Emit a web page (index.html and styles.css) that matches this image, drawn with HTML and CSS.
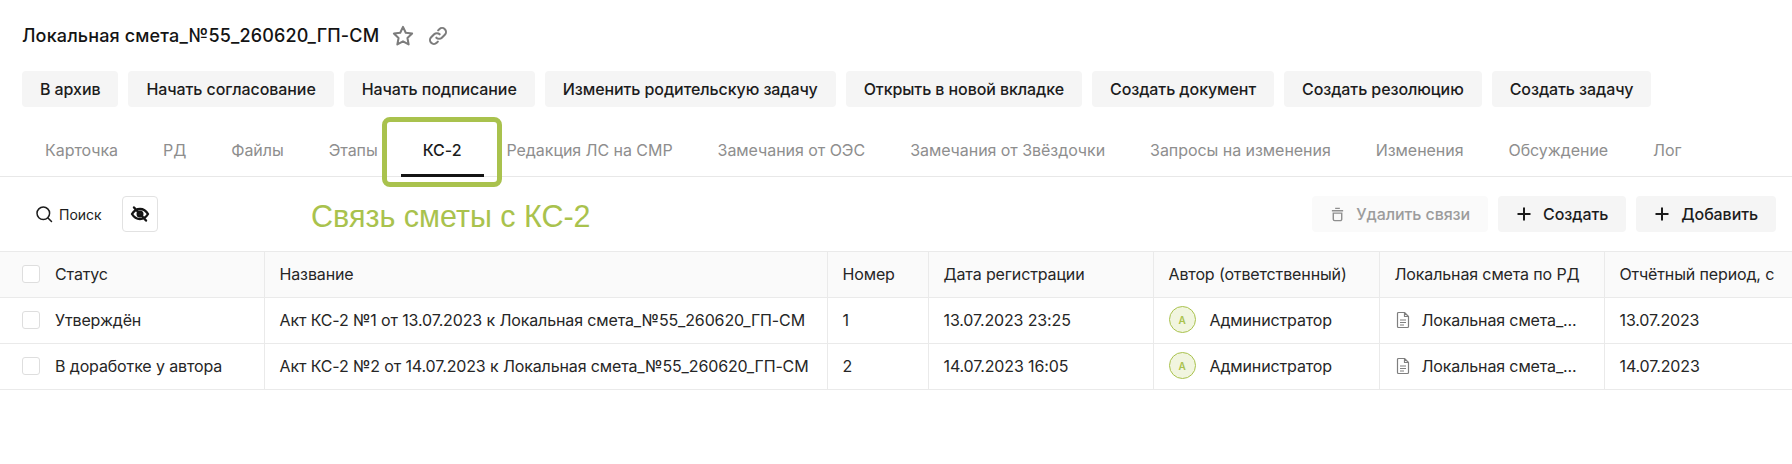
FILE: index.html
```html
<!DOCTYPE html>
<html lang="ru">
<head>
<meta charset="utf-8">
<title>Локальная смета</title>
<link rel="stylesheet" href="styles.css">
</head>
<body>
<div class="page">
  <header class="head">
    <h1 class="title">Локальная смета_№55_260620_ГП-СМ</h1>
    <svg class="head-icon" viewBox="0 0 20 20"><path d="M10 2.400l2.300 4.900 5.300.7-3.900 3.700 1 5.300-4.700-2.600-4.700 2.600 1-5.300L2.400 8l5.300-.7z"/></svg>
    <svg class="head-icon" viewBox="0 0 20 20"><path d="M8.600 11.400a3.200 3.200 0 0 0 4.600 0l2.500-2.500a3.250 3.250 0 0 0-4.600-4.600l-1 1M11.400 8.600a3.200 3.200 0 0 0-4.600 0l-2.500 2.500a3.250 3.250 0 0 0 4.600 4.600l1-1"/></svg>
  </header>
  <div class="actions">
    <button class="btn">В архив</button>
    <button class="btn">Начать согласование</button>
    <button class="btn">Начать подписание</button>
    <button class="btn">Изменить родительскую задачу</button>
    <button class="btn">Открыть в новой вкладке</button>
    <button class="btn">Создать документ</button>
    <button class="btn">Создать резолюцию</button>
    <button class="btn">Создать задачу</button>
  </div>
  <nav class="tabs">
    <span class="tab">Карточка</span>
    <span class="tab">РД</span>
    <span class="tab">Файлы</span>
    <span class="tab">Этапы</span>
    <span class="tab tab-active">КС-2<i class="highlight"></i></span>
    <span class="tab">Редакция ЛС на СМР</span>
    <span class="tab">Замечания от ОЭС</span>
    <span class="tab">Замечания от Звёздочки</span>
    <span class="tab">Запросы на изменения</span>
    <span class="tab">Изменения</span>
    <span class="tab">Обсуждение</span>
    <span class="tab">Лог</span>
  </nav>
  <div class="toolbar">
    <div class="search">
      <svg class="search-icon" viewBox="0 0 20 20"><circle cx="9.300" cy="9.300" r="6.300"/><path d="M14 14l3.500 3.500"/></svg>
      <span>Поиск</span>
    </div>
    <button class="eye">
      <svg viewBox="0 0 20 20"><path d="M2 10s3-5 8-5 8 5 8 5-3 5-8 5-8-5-8-5z"/><circle cx="10" cy="10" r="2.300"/><path d="M4 3.500L16 16.500"/></svg>
    </button>
    <span class="note">Связь сметы с КС-2</span>
    <div class="toolbar-right">
      <button class="btn btn-disabled"><svg class="trash" viewBox="0 0 16 16"><path d="M2 4h12M5.500 1.500h5M3.500 6.500h9V13a1.500 1.500 0 0 1-1.500 1.500H5A1.500 1.500 0 0 1 3.500 13z"/></svg>Удалить связи</button>
      <button class="btn"><svg class="plus" viewBox="0 0 16 16"><path d="M8 1.500v13M1.500 8h13"/></svg>Создать</button>
      <button class="btn"><svg class="plus" viewBox="0 0 16 16"><path d="M8 1.500v13M1.500 8h13"/></svg>Добавить</button>
    </div>
  </div>
  <table class="grid">
    <colgroup>
      <col class="c-status"><col class="c-name"><col class="c-num"><col class="c-date"><col class="c-author"><col class="c-ls"><col class="c-period">
    </colgroup>
    <thead>
      <tr>
        <th><span class="check-cell"><i class="check"></i>Статус</span></th>
        <th>Название</th>
        <th>Номер</th>
        <th>Дата регистрации</th>
        <th>Автор (ответственный)</th>
        <th>Локальная смета по РД</th>
        <th>Отчётный период, с</th>
      </tr>
    </thead>
    <tbody>
      <tr>
        <td><span class="check-cell"><i class="check"></i>Утверждён</span></td>
        <td>Акт КС-2 №1 от 13.07.2023 к Локальная смета_№55_260620_ГП-СМ</td>
        <td>1</td>
        <td>13.07.2023 23:25</td>
        <td><span class="author"><i class="avatar">А</i>Администратор</span></td>
        <td><span class="doc"><svg class="doc-icon" viewBox="0 0 16 18"><path d="M3.500 1.500h6l4 4v10a1 1 0 0 1-1 1h-9a1 1 0 0 1-1-1v-13a1 1 0 0 1 1-1zM9.500 1.500v4h4M5 9h6M5 11.500h6M5 14h4"/></svg>Локальная смета_...</span></td>
        <td>13.07.2023</td>
      </tr>
      <tr>
        <td><span class="check-cell"><i class="check"></i>В доработке у автора</span></td>
        <td>Акт КС-2 №2 от 14.07.2023 к Локальная смета_№55_260620_ГП-СМ</td>
        <td>2</td>
        <td>14.07.2023 16:05</td>
        <td><span class="author"><i class="avatar">А</i>Администратор</span></td>
        <td><span class="doc"><svg class="doc-icon" viewBox="0 0 16 18"><path d="M3.500 1.500h6l4 4v10a1 1 0 0 1-1 1h-9a1 1 0 0 1-1-1v-13a1 1 0 0 1 1-1zM9.500 1.500v4h4M5 9h6M5 11.500h6M5 14h4"/></svg>Локальная смета_...</span></td>
        <td>14.07.2023</td>
      </tr>
    </tbody>
  </table>
</div>
</body>
</html>
```
FILE: styles.css
```css
* { box-sizing: border-box; }
html, body { margin: 0; height: 100%; background: #fff; overflow: hidden; }
body { font-family: Inter, "Liberation Sans", sans-serif; color: #1c1c1c; }
.page { width: 1792px; }

.head { display: flex; align-items: center; height: 36px; margin-top: 18px; padding-left: 22px; }
.title { margin: 0 12px 0 0; font-size: 18px; font-weight: 500; letter-spacing: .15px; line-height: 36px; color: #141414; }
.head-icon { width: 24px; height: 24px; margin-right: 11px; fill: none; stroke: #7c7c7c; stroke-width: 1.700; stroke-linecap: round; stroke-linejoin: round; }

.actions { display: flex; gap: 10px; margin-top: 17px; padding-left: 22px; }
.btn { display: inline-flex; align-items: center; height: 36px; padding: 0 18px; border: 0; border-radius: 4px; background: #f5f5f5; font: 500 16px/20px Inter, "Liberation Sans", sans-serif; letter-spacing: -.085px; color: #1c1c1c; white-space: nowrap; }

.tabs { display: flex; gap: 45px; height: 70px; padding: 31px 0 0 45px; border-bottom: 1px solid #e8e8e8; }
.tab { position: relative; font-size: 16px; font-weight: 400; letter-spacing: -.05px; line-height: 24px; color: #8e8e8e; }
.tab-active { color: #1c1c1c; font-weight: 500; }
.tab-active::after { content: ""; position: absolute; left: -22px; right: -23px; top: 36px; height: 3px; background: #141414; }
.highlight { position: absolute; left: -41px; right: -41px; top: -21px; height: 70px; border: 5px solid #a9c24d; border-radius: 8px; }

.toolbar { position: relative; display: flex; align-items: center; height: 74px; padding: 0 16px 0 34px; }
.search { display: flex; align-items: center; gap: 5px; font-size: 14px; color: #1c1c1c; }
.search-icon { width: 20px; height: 20px; fill: none; stroke: #1c1c1c; stroke-width: 1.500; stroke-linecap: round; }
.eye { display: flex; align-items: center; justify-content: center; width: 36px; height: 36px; margin-left: 20px; padding: 0; background: #fff; border: 1px solid #e2e2e2; border-radius: 4px; }
.eye svg { width: 20px; height: 20px; fill: none; stroke: #141414; stroke-width: 2.400; stroke-linecap: round; stroke-linejoin: round; }
.note { position: absolute; left: 311px; top: 21px; font: 30.500px/36px "Liberation Sans", Arial, sans-serif; color: #a9c24d; }
.toolbar-right { display: flex; gap: 10px; margin-left: auto; }
.btn-disabled { background: #fafafa; color: #9c9c9c; }
.btn svg { margin-right: 11px; fill: none; }
.trash { width: 15px; height: 15px; stroke: #8f8f8f; stroke-width: 1.500; }
.plus { width: 16px; height: 16px; stroke: #1c1c1c; stroke-width: 2; }

.grid { width: 1792px; table-layout: fixed; border-collapse: collapse; font-size: 16px; letter-spacing: -.13px; line-height: 20px; }
.c-status { width: 264px; }
.c-name { width: 563px; }
.c-num { width: 101px; }
.c-date { width: 225px; }
.c-author { width: 226px; }
.c-ls { width: 225px; }
.grid tr { height: 46px; }
.grid th, .grid td { padding: 0 15px 2px; border: 1px solid #eaeaea; text-align: left; font-weight: 400; white-space: nowrap; overflow: hidden; color: #262626; }
.grid th:first-child, .grid td:first-child { border-left: 0; padding-left: 22px; }
.grid th:last-child, .grid td:last-child { border-right: 0; }
.grid th { background: #fafafa; }
.check-cell { display: flex; align-items: center; gap: 15px; }
.check { display: block; width: 18px; height: 18px; border: 1px solid #dedede; border-radius: 3px; background: #fff; }
.author, .doc { display: flex; align-items: center; }
.avatar { display: flex; align-items: center; justify-content: center; width: 27px; height: 27px; margin-right: 14px; border: 1px solid #a9c24d; border-radius: 50%; background: #f1f5df; font-style: normal; font-size: 10px; font-weight: 600; color: #a9c24d; }
.doc-icon { width: 16px; height: 18px; margin-right: 11px; fill: none; stroke: #7f7f7f; stroke-width: 1.200; stroke-linejoin: round; }
```
